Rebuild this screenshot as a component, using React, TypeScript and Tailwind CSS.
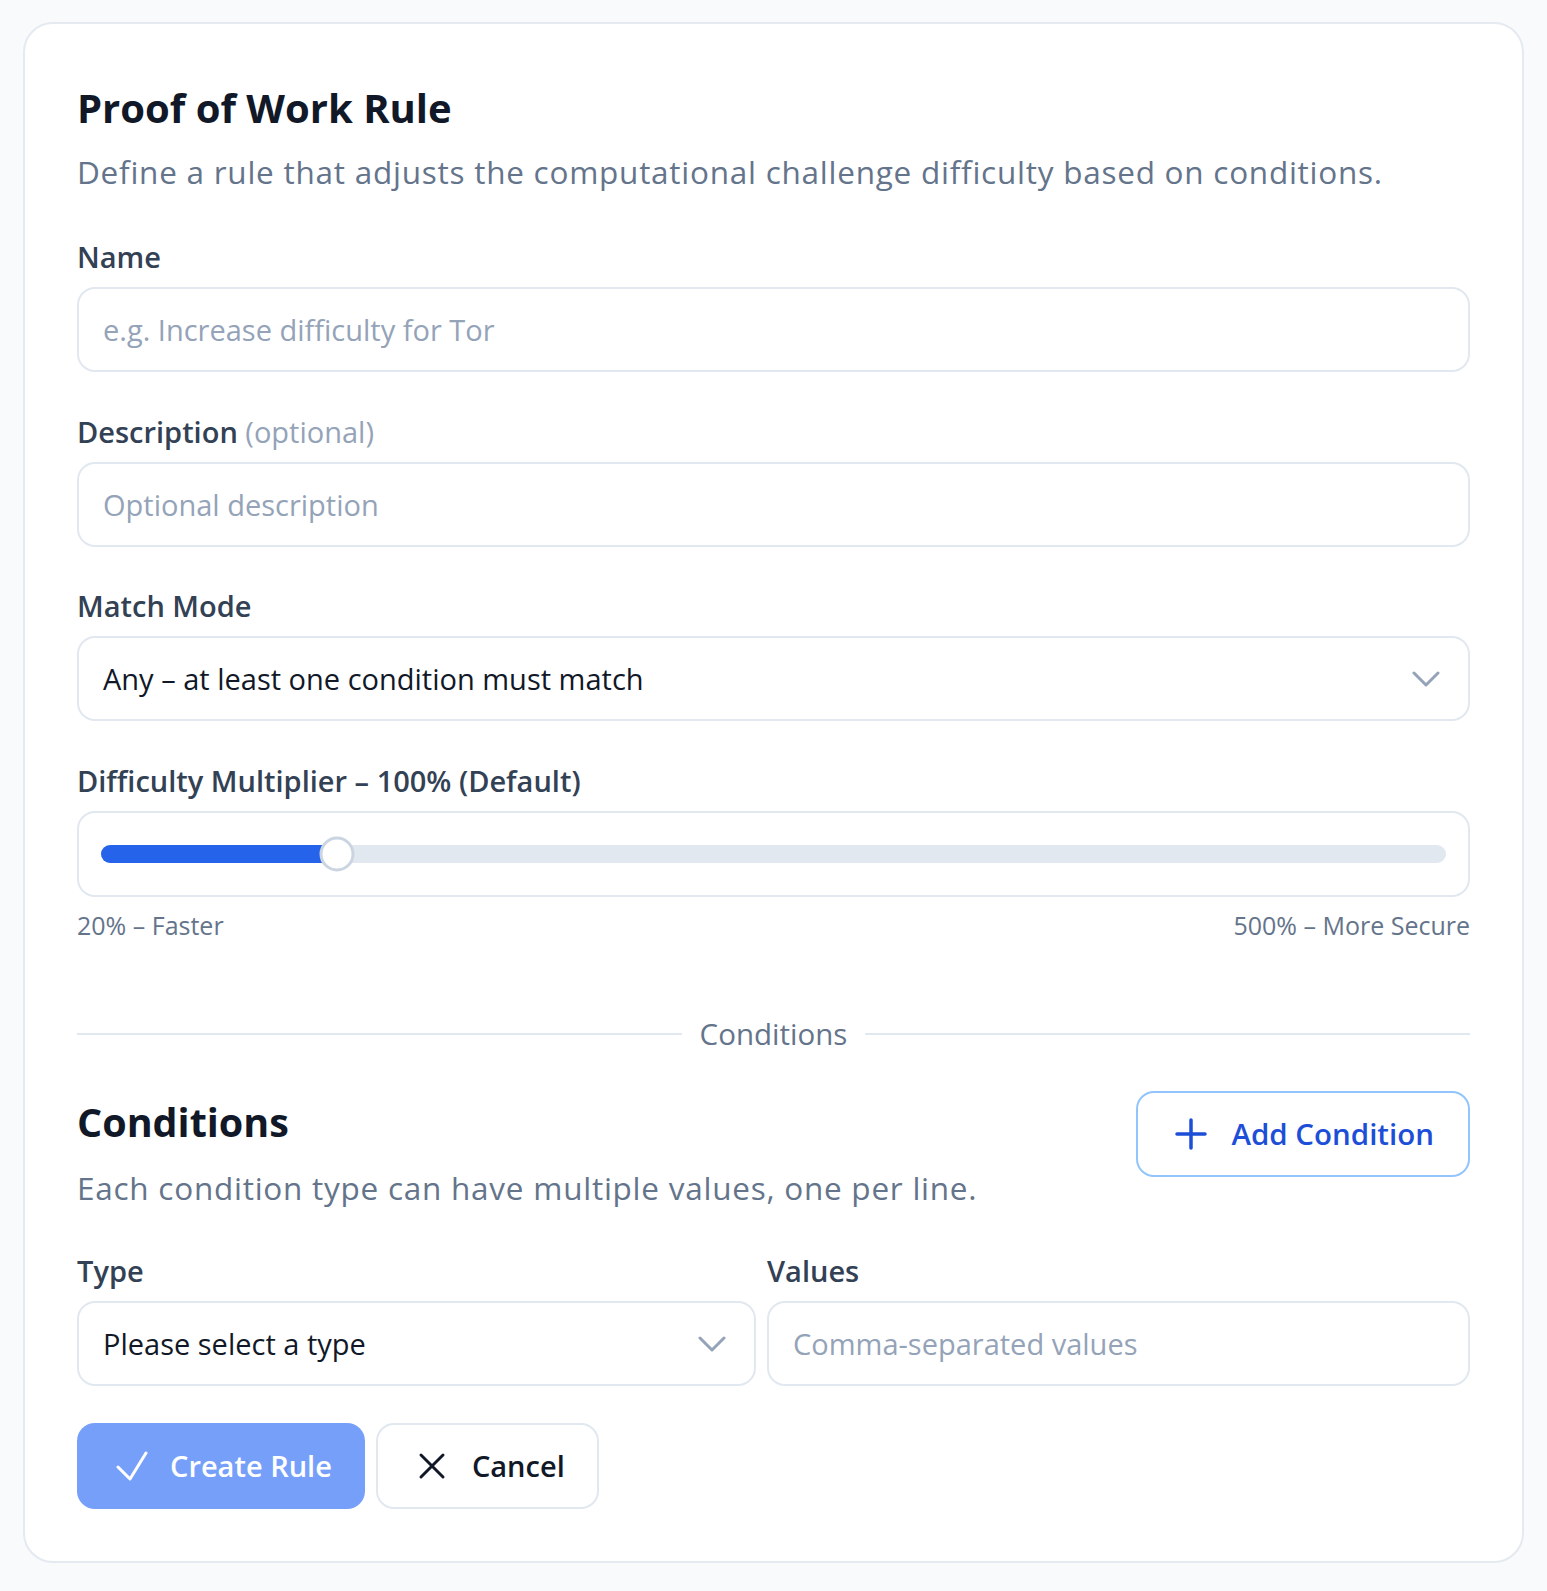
import type { ReactNode } from 'react';

const MIN = 20;
const MAX = 500;
const VALUE = 100;

function Chevron() {
  return (
    <svg width="28" height="16" viewBox="0 0 28 16" fill="none" className="shrink-0">
      <path
        d="M2 2l12 12L26 2"
        stroke="#94a3b8"
        strokeWidth="3"
        strokeLinecap="round"
        strokeLinejoin="round"
      />
    </svg>
  );
}

function Label({ children }: { children: ReactNode }) {
  return (
    <label className="block text-[29px] leading-[36px] font-semibold text-[#334155]">
      {children}
    </label>
  );
}

function TextInput({ placeholder }: { placeholder: string }) {
  return (
    <input
      type="text"
      placeholder={placeholder}
      className="mt-3 block h-[85px] w-full rounded-[18px] border-2 border-[#e2e8f0] bg-white px-6 text-[29px] text-[#111827] placeholder-[#94a3b8] outline-none"
    />
  );
}

function SelectBox({ value, className }: { value: string; className?: string }) {
  return (
    <button
      type="button"
      className={`flex h-[85px] w-full items-center justify-between rounded-[18px] border-2 border-[#e2e8f0] bg-white pr-[28px] pl-6 text-left text-[29px] text-[#111827] ${className ?? ''}`}
    >
      <span>{value}</span>
      <Chevron />
    </button>
  );
}

export default function App() {
  const pct = ((VALUE - MIN) / (MAX - MIN)) * 100;
  const thumbLeft = `calc(${pct}% - ${(pct * 35) / 100}px + 17.5px)`;

  return (
    <div className="min-h-screen bg-[#f8fafc] px-[23px] pt-[22px] pb-[28px] font-['Open_Sans',sans-serif]">
      <div className="rounded-[30px] border-2 border-[#e5e9f0] bg-white px-[52px] pt-[58px] pb-[52px]">
        <h1 className="text-[40px] leading-[52px] font-bold text-[#111827]">Proof of Work Rule</h1>
        <p className="mt-[18px] text-[31.5px] leading-[40px] tracking-[0.75px] text-[#64748b]">
          Define a rule that adjusts the computational challenge difficulty based on conditions.
        </p>

        <div className="mt-[47px]">
          <Label>Name</Label>
          <TextInput placeholder="e.g. Increase difficulty for Tor" />
        </div>

        <div className="mt-[42px]">
          <Label>
            Description <span className="font-normal text-[#94a3b8]">(optional)</span>
          </Label>
          <TextInput placeholder="Optional description" />
        </div>

        <div className="mt-[41px]">
          <Label>Match Mode</Label>
          <SelectBox value="Any – at least one condition must match" className="mt-3" />
        </div>

        <div className="mt-[42px]">
          <Label>Difficulty Multiplier – 100% (Default)</Label>
          <div className="mt-3 flex h-[86px] items-center rounded-[18px] border-2 border-[#e2e8f0] bg-white px-[22px]">
            <div className="relative h-[18px] w-full rounded-full bg-[#e2e8f0]">
              <div className="absolute top-0 left-0 h-full rounded-full bg-[#2563eb]" style={{ width: thumbLeft }} />
              <div
                className="absolute top-1/2 size-[35px] -translate-x-1/2 -translate-y-1/2 rounded-full border-[3px] border-[#cbd5e1] bg-white"
                style={{ left: thumbLeft }}
              />
            </div>
          </div>
          <div className="mt-3 flex justify-between text-[25px] leading-[32px] text-[#64748b]">
            <span>20% – Faster</span>
            <span>500% – More Secure</span>
          </div>
        </div>

        <div className="mt-[75px] flex items-center gap-[18px]">
          <div className="h-[2px] flex-1 bg-[#e2e8f0]" />
          <span className="text-[29.5px] leading-[36px] text-[#64748b]">Conditions</span>
          <div className="h-[2px] flex-1 bg-[#e2e8f0]" />
        </div>

        <div className="mt-[39px] flex items-start justify-between">
          <div>
            <h2 className="text-[39.5px] leading-[62px] font-bold text-[#111827]">Conditions</h2>
            <p className="mt-[15px] text-[31.5px] leading-[40px] tracking-[0.75px] text-[#64748b]">
              Each condition type can have multiple values, one per line.
            </p>
          </div>
          <button
            type="button"
            className="flex h-[86px] items-center gap-[24px] rounded-[18px] border-2 border-[#93c5fd] bg-white pr-[34px] pl-[37px] text-[29.5px] font-semibold text-[#1d4ed8]"
          >
            <svg width="32" height="32" viewBox="0 0 32 32" fill="none">
              <path d="M16 2v28M2 16h28" stroke="currentColor" strokeWidth="3.5" strokeLinecap="round" />
            </svg>
            Add Condition
          </button>
        </div>

        <div className="mt-[45px] grid grid-cols-[679px_1fr] gap-x-[11px]">
          <div>
            <Label>Type</Label>
            <SelectBox value="Please select a type" className="mt-3" />
          </div>
          <div>
            <Label>Values</Label>
            <TextInput placeholder="Comma-separated values" />
          </div>
        </div>

        <div className="mt-[37px] flex gap-[11px]">
          <button
            type="button"
            className="flex h-[86px] items-center gap-[22px] rounded-[18px] bg-[#769ffa] pr-[33px] pl-[39px] text-[29px] font-semibold text-white"
          >
            <svg width="32" height="30" viewBox="0 0 32 30" fill="none">
              <path d="M2 16l12 12L30 2" stroke="currentColor" strokeWidth="3" strokeLinecap="round" strokeLinejoin="round" />
            </svg>
            Create Rule
          </button>
          <button
            type="button"
            className="flex h-[86px] items-center gap-[26px] rounded-[18px] border-2 border-[#e2e8f0] bg-white pr-[32px] pl-[40px] text-[29px] font-semibold text-[#111827]"
          >
            <svg width="28" height="28" viewBox="0 0 28 28" fill="none">
              <path d="M3 3l22 22M25 3L3 25" stroke="currentColor" strokeWidth="3" strokeLinecap="round" />
            </svg>
            Cancel
          </button>
        </div>
      </div>
    </div>
  );
}
